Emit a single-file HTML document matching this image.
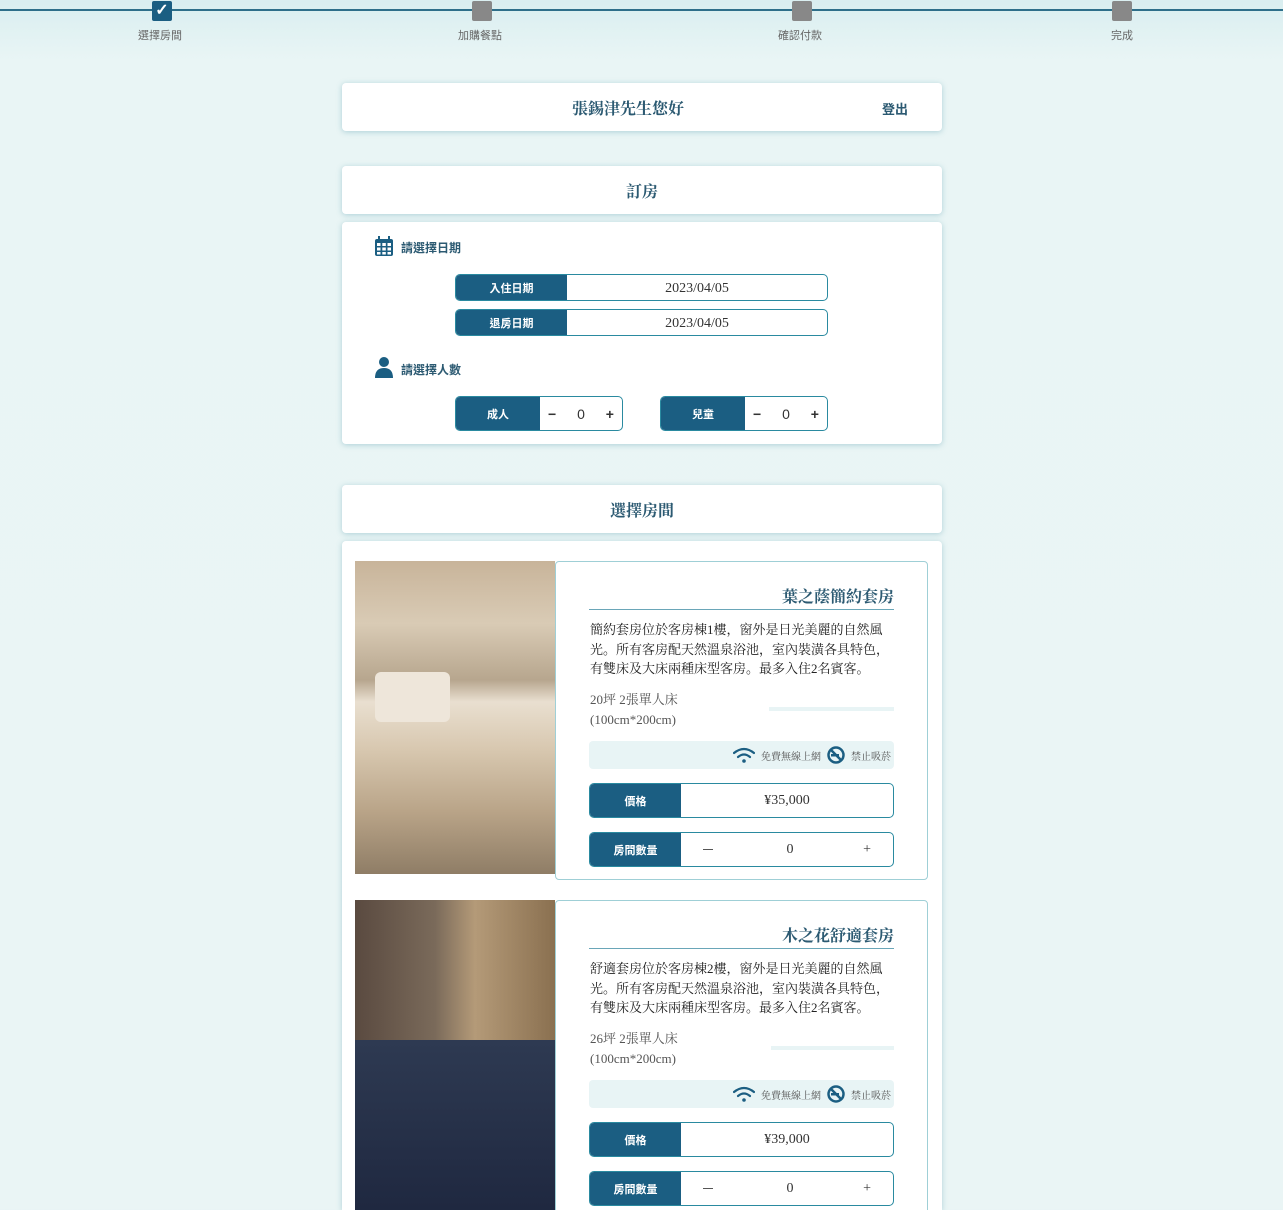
<!DOCTYPE html>
<html style="overflow:hidden;height:1210px"><head><meta charset="utf-8"><style>
*{box-sizing:border-box;margin:0;padding:0}
body{width:1283px;height:1210px;overflow:hidden;background:linear-gradient(#d9eef0 0,#e9f5f5 60px,#eaf5f5 100%);font-family:"Liberation Serif","Noto Serif CJK SC","Noto Sans CJK TC",serif;color:#333;position:relative}
.abs{position:absolute}
.line{left:0;top:9px;width:1283px;height:2px;background:#2e6f8a}
.step{width:20px;height:20px;top:1px;background:#888;border-radius:2px}
.step.on{background:#1b5e82;color:#fff;font:bold 16px sans-serif;text-align:center;line-height:20px}
.sl{top:27px;font-size:11px;color:#666;width:80px;text-align:center;font-family:"Noto Sans CJK TC",sans-serif}
.card{background:#fff;border-radius:4px;box-shadow:0 1px 6px rgba(60,140,160,.35)}
.hd{font-size:16px;font-weight:bold;color:#2c5a72;text-align:center;font-family:"Noto Serif CJK SC",serif}
.pill{height:27px;border:1.5px solid #2a8aa0;border-radius:5px;display:flex;overflow:hidden;background:#fff}
.pill .lb{background:#1b5e82;color:#fff;font:bold 11px "Noto Sans CJK TC",sans-serif;display:flex;align-items:center;justify-content:center}
.pill .v{flex:1;display:flex;align-items:center;justify-content:center;font-size:14px;color:#333}
.sec{font:bold 12px "Noto Sans CJK TC",sans-serif;color:#2c5a72}
.room{border:1px solid #9fcfd6;border-radius:4px;background:#fff}
.title{font:bold 16px "Noto Serif CJK SC",serif;color:#2c5a72;text-align:right;border-bottom:1px solid #6aa6b8;padding-bottom:2px}
.desc{font-size:13px;line-height:19.5px;color:#222}
.spec{font-size:13px;line-height:19.5px;color:#555}
.amen{background:#e8f4f5;border-radius:4px;height:28px;display:flex;align-items:center;justify-content:flex-end;padding-right:3px;font-size:10px;color:#555;gap:6px}
</style></head><body>
<div class="abs line"></div>
<div class="abs step on" style="left:152px">✓</div>
<div class="abs step" style="left:472px"></div>
<div class="abs step" style="left:792px"></div>
<div class="abs step" style="left:1112px"></div>
<div class="abs sl" style="left:120px">選擇房間</div>
<div class="abs sl" style="left:440px">加購餐點</div>
<div class="abs sl" style="left:760px">確認付款</div>
<div class="abs sl" style="left:1082px">完成</div>

<div class="abs card" style="left:342px;top:83px;width:600px;height:48px">
<div class="abs hd" style="left:0;width:572px;top:13px;text-align:center">張錫津先生您好</div>
<div class="abs sec" style="left:540px;top:16px;font-size:13px">登出</div></div>

<div class="abs card" style="left:342px;top:166px;width:600px;height:48px"><div class="hd" style="margin-top:13px">訂房</div></div>
<div class="abs card" style="left:342px;top:222px;width:600px;height:222px">
<svg class="abs" style="left:33px;top:14px" width="18" height="20" viewBox="0 0 18 20"><rect x="0" y="3" width="18" height="17" rx="2" fill="#1b5e82"/><rect x="3" y="0" width="2" height="5" fill="#1b5e82"/><rect x="13" y="0" width="2" height="5" fill="#1b5e82"/><g fill="#fff"><rect x="2" y="7" width="3.5" height="3"/><rect x="7.3" y="7" width="3.5" height="3"/><rect x="12.5" y="7" width="3.5" height="3"/><rect x="2" y="11.5" width="3.5" height="3"/><rect x="7.3" y="11.5" width="3.5" height="3"/><rect x="12.5" y="11.5" width="3.5" height="3"/><rect x="2" y="16" width="3.5" height="2.5"/><rect x="7.3" y="16" width="3.5" height="2.5"/><rect x="12.5" y="16" width="3.5" height="2.5"/></g></svg>
<div class="abs sec" style="left:59px;top:17px">請選擇日期</div>
<div class="abs pill" style="left:113px;top:52px;width:373px"><div class="lb" style="width:111px">入住日期</div><div class="v" style="padding-top:2px">2023/04/05</div></div>
<div class="abs pill" style="left:113px;top:87px;width:373px"><div class="lb" style="width:111px">退房日期</div><div class="v" style="padding-top:2px">2023/04/05</div></div>
<svg class="abs" style="left:33px;top:134px" width="18" height="22" viewBox="0 0 18 22"><circle cx="9" cy="6" r="5" fill="#1b5e82"/><path d="M0 22 Q0 12 9 12 Q18 12 18 22Z" fill="#1b5e82"/></svg>
<div class="abs sec" style="left:59px;top:139px">請選擇人數</div>
<div class="abs pill" style="left:113px;top:174px;width:168px;height:35px"><div class="lb" style="width:84px">成人</div><div class="v" style="justify-content:space-between;padding:0 8px;font-family:'Liberation Sans',sans-serif"><b>−</b><span>0</span><b>+</b></div></div>
<div class="abs pill" style="left:318px;top:174px;width:168px;height:35px"><div class="lb" style="width:84px">兒童</div><div class="v" style="justify-content:space-between;padding:0 8px;font-family:'Liberation Sans',sans-serif"><b>−</b><span>0</span><b>+</b></div></div>
</div>

<div class="abs card" style="left:342px;top:485px;width:600px;height:48px"><div class="hd" style="margin-top:13px">選擇房間</div></div>
<div class="abs card" style="left:342px;top:541px;width:600px;height:669px;border-radius:4px 4px 0 0"></div>

<div class="abs" style="left:355px;top:561px;width:200px;height:313px;background:linear-gradient(180deg,#c8b49a 0,#d9cbb5 20%,#b7a68e 38%,#e9dfd0 45%,#d8c8b0 60%,#b9a488 80%,#8f7d66 100%)"></div>
<div class="abs" style="left:375px;top:672px;width:75px;height:50px;background:#eee6da;border-radius:6px"></div>
<div class="abs room" style="left:555px;top:561px;width:373px;height:319px">
<div class="abs title" style="left:33px;top:22px;width:305px">葉之蔭簡約套房</div>
<div class="abs desc" style="left:34px;top:58px;width:305px">簡約套房位於客房棟1樓，窗外是日光美麗的自然風光。所有客房配天然溫泉浴池，室內裝潢各具特色，有雙床及大床兩種床型客房。最多入住2名賓客。</div>
<div class="abs spec" style="left:34px;top:128px">20坪 2張單人床<br>(100cm*200cm)</div>
<div class="abs" style="left:213px;top:145px;width:125px;height:4px;background:#e8f4f5"></div>
<div class="abs amen" style="left:33px;top:179px;width:305px">
<svg width="22" height="16" viewBox="0 0 22 16"><path d="M1 6 Q11 -2 21 6" stroke="#1b5e82" stroke-width="2.2" fill="none" stroke-linecap="round"/><path d="M5 10 Q11 5 17 10" stroke="#1b5e82" stroke-width="2.2" fill="none" stroke-linecap="round"/><circle cx="11" cy="14" r="1.8" fill="#1b5e82"/></svg><span>免費無線上網</span>
<svg width="18" height="18" viewBox="0 0 18 18"><circle cx="9" cy="9" r="7.5" stroke="#1b5e82" stroke-width="2.5" fill="none"/><path d="M3.8 3.8 L14.2 14.2" stroke="#1b5e82" stroke-width="2.5"/><rect x="4" y="8" width="8" height="2.5" fill="#1b5e82"/></svg><span>禁止吸菸</span></div>
<div class="abs pill" style="left:33px;top:221px;width:305px;height:35px"><div class="lb" style="width:91px">價格</div><div class="v">¥35,000</div></div>
<div class="abs pill" style="left:33px;top:270px;width:305px;height:35px"><div class="lb" style="width:91px">房間數量</div><div class="v" style="justify-content:space-between;padding:0 22px">　<span>0</span>+</div></div>
<div class="abs" style="left:147px;top:287px;width:10px;height:1px;background:#555"></div>
</div>

<div class="abs" style="left:355px;top:900px;width:200px;height:310px;background:linear-gradient(90deg,#5a4a40 0,#7a6a5a 40%,#b49a78 60%,#8a7050 100%)"></div>
<div class="abs" style="left:355px;top:1040px;width:200px;height:170px;background:linear-gradient(#2e3a52,#1f2840)"></div>
<div class="abs room" style="left:555px;top:900px;width:373px;height:319px">
<div class="abs title" style="left:33px;top:22px;width:305px">木之花舒適套房</div>
<div class="abs desc" style="left:34px;top:58px;width:305px">舒適套房位於客房棟2樓，窗外是日光美麗的自然風光。所有客房配天然溫泉浴池，室內裝潢各具特色，有雙床及大床兩種床型客房。最多入住2名賓客。</div>
<div class="abs spec" style="left:34px;top:128px">26坪 2張單人床<br>(100cm*200cm)</div>
<div class="abs" style="left:215px;top:145px;width:123px;height:4px;background:#e8f4f5"></div>
<div class="abs amen" style="left:33px;top:179px;width:305px">
<svg width="22" height="16" viewBox="0 0 22 16"><path d="M1 6 Q11 -2 21 6" stroke="#1b5e82" stroke-width="2.2" fill="none" stroke-linecap="round"/><path d="M5 10 Q11 5 17 10" stroke="#1b5e82" stroke-width="2.2" fill="none" stroke-linecap="round"/><circle cx="11" cy="14" r="1.8" fill="#1b5e82"/></svg><span>免費無線上網</span>
<svg width="18" height="18" viewBox="0 0 18 18"><circle cx="9" cy="9" r="7.5" stroke="#1b5e82" stroke-width="2.5" fill="none"/><path d="M3.8 3.8 L14.2 14.2" stroke="#1b5e82" stroke-width="2.5"/><rect x="4" y="8" width="8" height="2.5" fill="#1b5e82"/></svg><span>禁止吸菸</span></div>
<div class="abs pill" style="left:33px;top:221px;width:305px;height:35px"><div class="lb" style="width:91px">價格</div><div class="v">¥39,000</div></div>
<div class="abs pill" style="left:33px;top:270px;width:305px;height:35px"><div class="lb" style="width:91px">房間數量</div><div class="v" style="justify-content:space-between;padding:0 22px">　<span>0</span>+</div></div>
<div class="abs" style="left:147px;top:287px;width:10px;height:1px;background:#555"></div>
</div>
</body></html>
